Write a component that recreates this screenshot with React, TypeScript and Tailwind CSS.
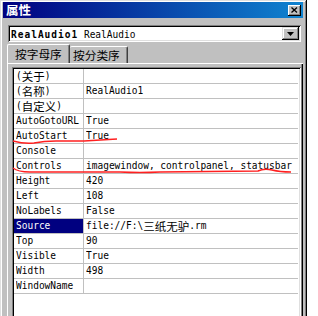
import React from "react";

const mono = "font-['DejaVu_Sans_Mono','Noto_Sans_CJK_SC',monospace]";
const cjk = "font-['Noto_Sans_CJK_SC','DejaVu_Sans_Mono',sans-serif]";

type Row = { label: React.ReactNode; value?: React.ReactNode; selected?: boolean };

const C = ({ children }: { children: React.ReactNode }) => (
  <span className={`${cjk} text-[11.5px] leading-[12px] block scale-y-[0.9]`}>{children}</span>
);

const rows: Row[] = [
  { label: <>(<C>关于</C>)</> },
  { label: <>(<C>名称</C>)</>, value: "RealAudio1" },
  { label: <>(<C>自定义</C>)</> },
  { label: "AutoGotoURL", value: "True" },
  { label: "AutoStart", value: "True" },
  { label: "Console" },
  { label: "Controls", value: "imagewindow, controlpanel, statusbar" },
  { label: "Height", value: "420" },
  { label: "Left", value: "108" },
  { label: "NoLabels", value: "False" },
  { label: "Source", value: <>file://F:\<C>三纸无驴</C>.rm</>, selected: true },
  { label: "Top", value: "90" },
  { label: "Visible", value: "True" },
  { label: "Width", value: "498" },
  { label: "WindowName" },
];

const raised =
  "shadow-[inset_-1px_-1px_#000,inset_1px_1px_#dfdfdf,inset_-2px_-2px_#808080,inset_2px_2px_#fff]";
const sunken =
  "shadow-[inset_1px_1px_#808080,inset_-1px_-1px_#fff,inset_2px_2px_#000,inset_-2px_-2px_#dfdfdf]";

export default function App() {
  return (
    <div className="relative w-[318px] h-[316px] bg-white overflow-hidden">
      <div className={`w-[307px] h-[340px] bg-[#c0c0c0] pt-[2px] px-[3px] ${raised}`}>
        {/* title bar */}
        <div className="h-[16px] w-[300px] flex items-center justify-between bg-[linear-gradient(90deg,#000080,#1084d0)] pl-[3px] pr-[2px]">
          <span className={`${cjk} text-[12.5px] font-bold text-white leading-[16px]`}>属性</span>
          <div className="w-[13px] h-[11px] bg-[#c0c0c0] flex items-center justify-center shadow-[inset_-1px_-1px_#000,inset_1px_1px_#fff,inset_-2px_-2px_#808080]">
            <svg width="7" height="6" viewBox="0 0 7 6">
              <path d="M0.5 0.5 L6 5.5 M6 0.5 L0.5 5.5" stroke="#000" strokeWidth="1.3" />
            </svg>
          </div>
        </div>
        {/* combo */}
        <div className={`mt-[7px] ml-[5px] w-[293px] h-[17px] bg-white flex items-center ${sunken}`}>
          <div className={`flex-1 pl-[3px] ${mono} text-[9.5px] text-black whitespace-pre leading-[13px] scale-y-[1.15]`}>
            <span className="font-bold tracking-[1px]">RealAudio1</span> RealAudio
          </div>
          <div className={`w-[17px] h-[13px] mr-[2px] bg-[#c0c0c0] flex items-center justify-center ${raised}`}>
            <svg width="7" height="4" viewBox="0 0 7 4">
              <path d="M0 0 H7 L3.5 4 Z" fill="#000" />
            </svg>
          </div>
        </div>
        {/* tabs */}
        <div className="mt-[2px] ml-[4px] flex items-end h-[19px]">
          <div className="relative z-10 w-[63px] h-[19px] bg-[#c0c0c0] border-t border-l border-white border-r border-r-[#404040] rounded-t-[2px] flex items-start pl-[7px] pt-[1px] shadow-[inset_-1px_0_#808080]">
            <span className={`${cjk} text-[11.7px] leading-[16px] text-black`}>按字母序</span>
          </div>
          <div className="w-[58px] h-[17px] bg-[#c0c0c0] border-t border-white border-r border-r-[#404040] rounded-t-[2px] flex items-start pl-[3px] shadow-[inset_-1px_0_#808080]">
            <span className={`${cjk} text-[11.7px] leading-[15px] text-black`}>按分类序</span>
          </div>
        </div>
        {/* panel */}
        <div className="ml-[4px] w-[296px] h-[270px] bg-[#c0c0c0] pt-[3px] pl-[4px] pr-[3px] border-t border-l border-white shadow-[inset_-1px_0_#000,inset_-2px_0_#808080]">
          <div className={`w-[289px] h-[264px] bg-white pt-[2px] pl-[2px] pr-[3px] ${sunken}`}>
            {rows.map((r, i) => (
              <div key={i} className={`flex h-[15px] border-b border-[#c0c0c0] ${mono} text-[9.5px] text-black leading-[14px]`}>
                <div
                  className={`w-[70px] h-[14px] shrink-0 border-r border-[#c0c0c0] pl-[2px] overflow-hidden ${
                    r.selected ? "bg-[#000080] text-white" : ""
                  }`}
                >
                  <span className="flex items-center h-[14px] scale-y-[1.12] whitespace-pre">{r.label}</span>
                </div>
                <div className="flex-1 h-[14px] pl-[2px] overflow-hidden">
                  <span className="flex items-center h-[14px] scale-y-[1.12] whitespace-pre">{r.value}</span>
                </div>
              </div>
            ))}
          </div>
        </div>
      </div>
      <svg className="absolute left-0 top-0 pointer-events-none" width="318" height="316">
        <path d="M13 141 Q24 144 34 143 Q44 141 56 141 L84 141 Q100 140 117 139" stroke="#ff2020" strokeWidth="1.4" fill="none" />
        <path d="M13 168 Q18 172 30 172 L120 172 Q140 173 160 172 L258 171 Q264 168 272 170 Q280 172 291 172" stroke="#ff2020" strokeWidth="1.4" fill="none" />
      </svg>
    </div>
  );
}
